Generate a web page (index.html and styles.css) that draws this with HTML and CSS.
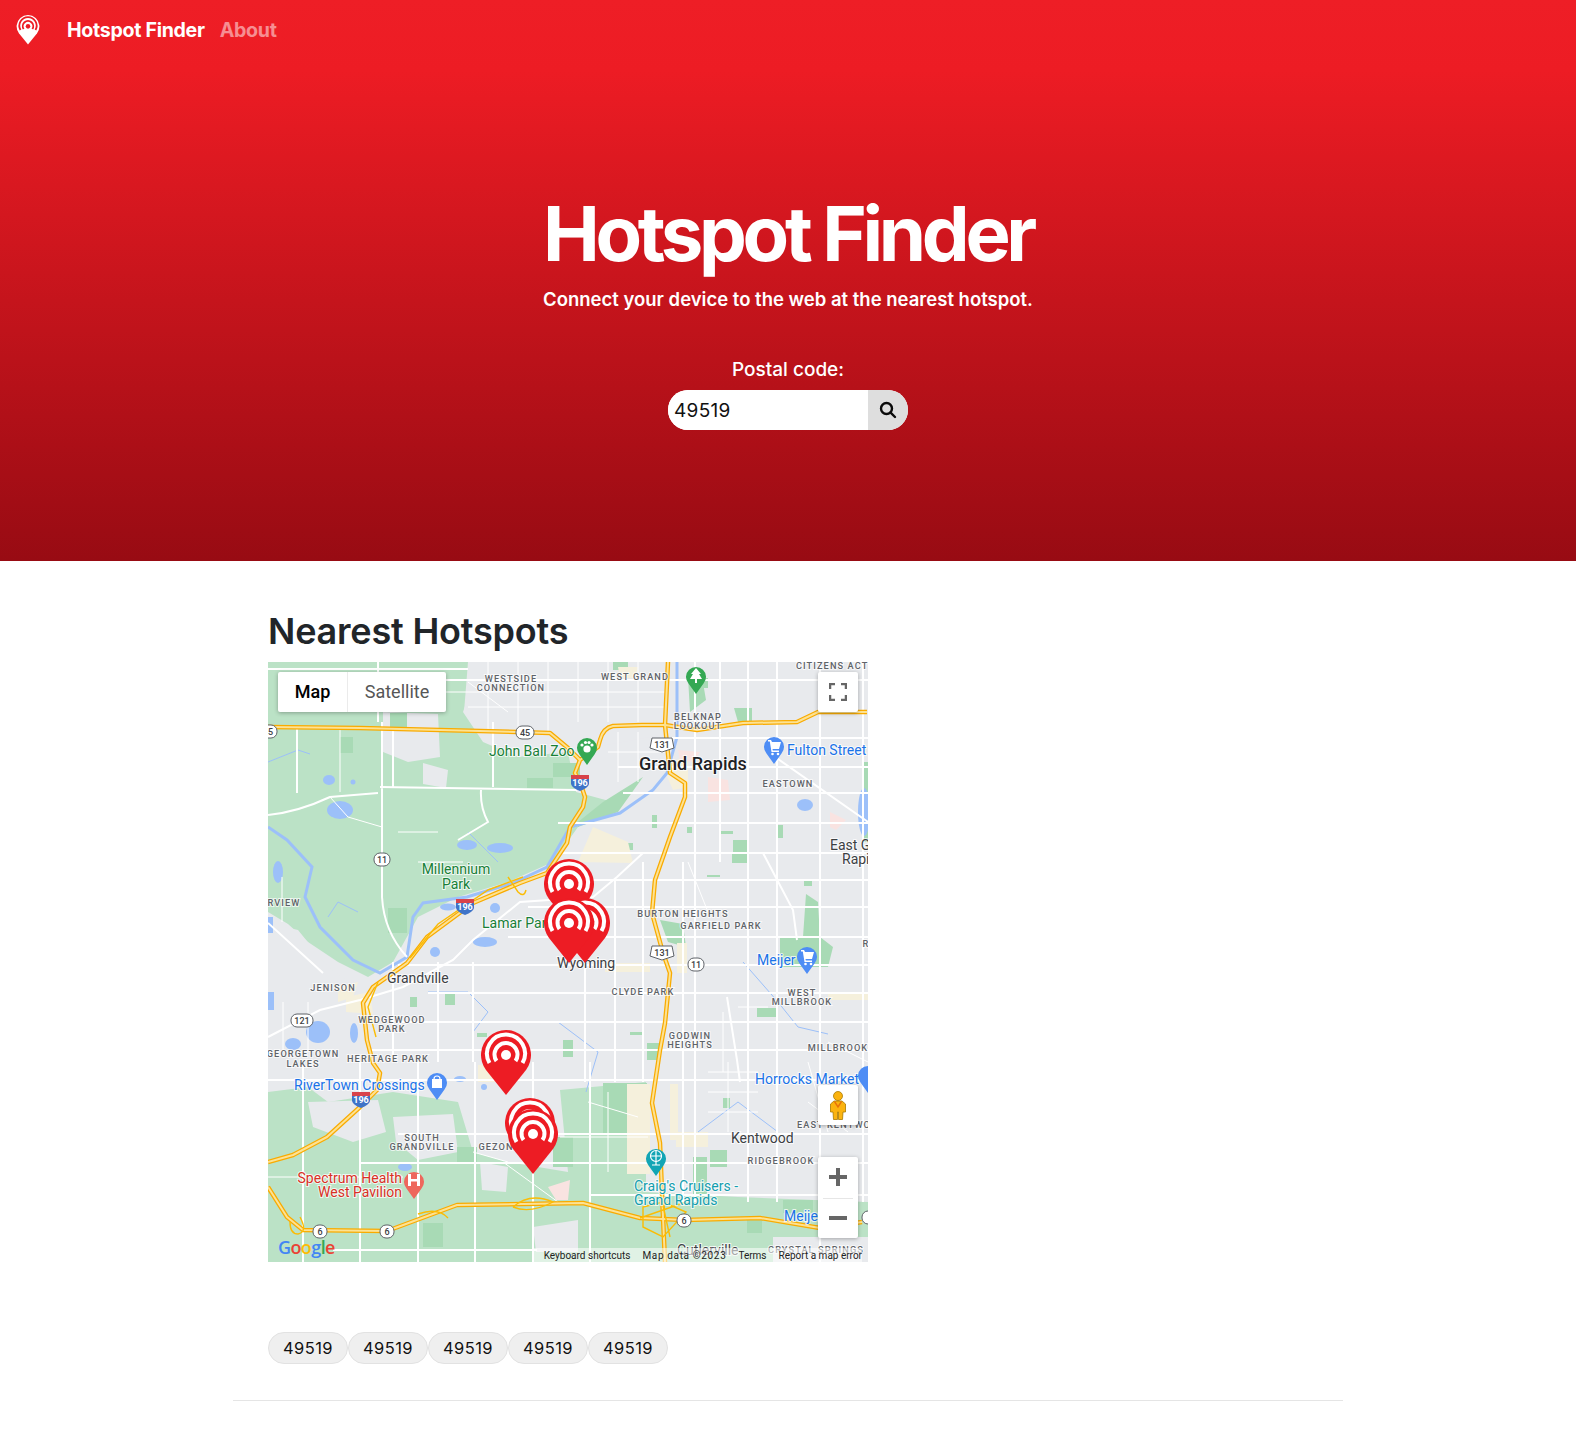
FILE: index.html
```html
<!DOCTYPE html>
<html lang="en">
<head>
  <meta charset="UTF-8">
  <meta name="viewport" content="width=device-width, initial-scale=1.0">
  <title>Hotspot Finder</title>
  <link rel="stylesheet" href="styles.css">
</head>
<body>
  <svg class="defs" width="0" height="0" aria-hidden="true">
    <symbol id="pin" viewBox="0 0 50 66">
      <path class="pin-body" d="M25 65 L5 40 A25 25 0 1 1 45 40 Z"/>
      <path class="pin-ring" d="M8.5 33 A19 19 0 1 1 41.5 33"/>
      <path class="pin-ring" d="M15.5 31 A11.5 11.5 0 1 1 34.5 31"/>
      <circle class="pin-dot" cx="25" cy="25" r="5"/>
    </symbol>
    <symbol id="poi" viewBox="0 0 22 30">
      <path d="M11 29 L3.5 18.5 A10 10 0 1 1 18.5 18.5 Z"/>
    </symbol>
    <g id="hw-lines">
      <path d="M0 65 L92 66 L249 70 L282 71 L300 86 L312 98"/>
      <path d="M599 50 L550 50 L529 60 L475 61 L429 68 L397 63 L374 63 L345 64 Q335 66 332 78 L330 85 L312 98 L307 111 L312 120 L317 135 L315 145 L302 165 L299 181 L279 211 L252 221 L205 241 L159 275 L139 301 L105 325 L95 341 L99 378 L105 401 L112 411 L109 428 L92 445 L59 475 L25 493 L0 500"/>
      <path d="M400 0 L397 63 L402 111 L417 121 L417 135 L402 175 L387 218 L384 251 L395 291 L402 311 L397 361 L392 388 L384 441 L392 481 L395 555 L397 600"/>
      <path d="M0 525 L19 555 L35 568 L119 569 L189 543 L315 541 L372 556 L417 558 L492 556 L552 566 L594 560"/>
    </g>
  </svg>

  <!-- Hero -->
  <section class="hero">
    <nav class="navbar">
      <svg class="logo" width="24" height="30"><use href="#pin"/></svg>
      <a class="brand" href="#">Hotspot Finder</a>
      <a class="nav-link" href="#">About</a>
    </nav>
    <h1>Hotspot Finder</h1>
    <p class="lead">Connect your device to the web at the nearest hotspot.</p>
    <label class="postal-label" for="postal">Postal code:</label>
    <div class="search">
      <input type="text" id="postal" value="49519">
      <button type="button" aria-label="Search">
        <svg width="18" height="18" viewBox="0 0 18 18"><circle cx="7.5" cy="7.5" r="5.5"/><path d="M11.6 11.6 L16 16"/></svg>
      </button>
    </div>
  </section>

  <main class="container">
    <h2>Nearest Hotspots</h2>

    <div class="map">
      <svg class="map-canvas" width="600" height="600" viewBox="0 0 600 600">
        <rect width="600" height="600" class="urban"/>

        <!-- parks and fields -->
        <path class="green" d="M0 0 L200 0 L205 20 L195 50 L215 80 L250 95 L300 90 L308 130 L345 140 L310 165 L285 200 L240 220 L190 235 L150 255 L125 300 L100 315 L70 300 L40 280 L20 262 L0 250 Z"/>
        <path class="green" d="M0 430 L40 425 L60 440 L125 430 L190 440 L205 490 L240 500 L300 510 L292 428 L378 420 L378 530 L470 535 L600 540 L600 600 L0 600 Z"/>
        <path class="urban" d="M115 50 L170 52 L172 95 L140 100 L115 90 Z M155 101 L180 108 L178 126 L155 122 Z M0 261 L30 268 L60 305 L95 330 L90 400 L0 400 Z M40 440 L110 438 L118 470 L85 480 L45 465 Z M125 455 L185 452 L190 490 L150 498 L128 480 Z M212 500 L240 505 L238 530 L214 528 Z M265 565 L310 558 L310 590 L268 590 Z M505 575 L600 575 L600 600 L505 600 Z"/>
        <path class="urban" d="M200 0 L410 0 L410 70 L300 90 L245 92 L215 78 L196 50 Z"/>
        <path class="dark-green" d="M72 75 H85 V91 H72 Z M122 51 H139 V65 H122 Z M259 116 H285 V126 H259 Z M285 101 H312 V115 H285 Z M120 246 H139 V271 H120 Z M310 160 L335 140 L375 115 L350 150 L310 165 Z M345 0 H360 V8 H345 Z M420 15 L434 15 L438 38 L422 50 Z M466 46 H484 V60 H470 Z M430 16 H440 V26 H430 Z"/>
        <path class="dark-green" d="M465 178 H480 V190 H465 Z M464 191 H480 V201 H464 Z M510 163 H515 V176 H510 Z M453 169 H465 V172 H453 Z M419 165 H424 V171 H419 Z M384 153 H389 V166 H384 Z M355 181 H365 V188 H355 Z M536 218 H544 V224 H536 Z M439 213 H452 V215 H439 Z M595 100 H600 V180 H595 Z"/>
        <path class="dark-green" d="M489 346 H510 V355 H489 Z M362 370 H374 V373 H362 Z M379 381 H392 V398 H379 Z M295 378 H305 V395 H295 Z M177 331 H187 V343 H177 Z M142 335 H149 V345 H142 Z M209 371 H219 V375 H209 Z M392 258 L415 262 L418 285 L400 280 Z M512 275 L535 275 L538 232 L550 240 L552 275 L565 285 L560 305 L512 305 Z"/>
        <path class="dark-green" d="M189 485 H209 V501 H189 Z M155 561 H175 V585 H155 Z M285 475 H305 V505 H285 Z M335 421 H379 V471 H335 Z M292 475 H302 V501 H292 Z M425 495 H439 V535 H425 Z M442 488 H459 V505 H442 Z M455 436 H462 V446 H455 Z M479 558 H494 V571 H479 Z M515 538 H545 V551 H515 Z"/>
        <path class="beige" d="M350 5 L370 5 L368 16 L352 16 Z M325 165 L360 180 L365 201 L310 200 Z M395 105 L420 92 L420 125 L405 128 Z M337 301 H382 V310 H337 Z M409 281 H419 V311 H409 Z M78 335 L102 330 L105 352 L78 350 Z M210 403 H236 V420 H210 Z M359 422 H382 V512 H359 Z M402 422 H410 V478 H402 Z M408 470 H440 V485 H408 Z M560 330 H600 V338 H560 Z M70 325 L90 320 L85 335 L70 340 Z"/>
        <path class="pink" d="M410 88 L432 90 L425 100 L412 98 Z M440 115 L460 118 L462 138 L440 140 Z M562 150 L578 158 L568 168 L562 165 Z M280 525 L302 518 L300 538 L288 538 Z"/>

        <!-- water -->
        <path class="river" d="M409 0 L409 75 L399 111 L385 128 L352 151 L302 165 L279 205 L245 221 L199 235 L155 241 L145 255 L139 295 L112 311 L85 298 L52 265 L37 235 L44 205 L19 178 L0 165"/>
        <g class="water">
          <ellipse cx="61" cy="118" rx="6" ry="5"/>
          <ellipse cx="72" cy="148" rx="13" ry="9"/>
          <circle cx="85" cy="120" r="2.500"/>
          <ellipse cx="199" cy="183" rx="10" ry="5"/>
          <ellipse cx="232" cy="186" rx="13" ry="5"/>
          <ellipse cx="180" cy="245" rx="8" ry="3.500"/>
          <ellipse cx="227" cy="246" rx="5" ry="5"/>
          <ellipse cx="217" cy="280" rx="12" ry="5"/>
          <ellipse cx="167" cy="290" rx="5" ry="5"/>
          <ellipse cx="10" cy="210" rx="5" ry="11"/>
          <ellipse cx="50" cy="370" rx="12" ry="11"/>
          <ellipse cx="25" cy="382" rx="8" ry="6"/>
          <ellipse cx="86" cy="371" rx="4" ry="10"/>
          <ellipse cx="137" cy="505" rx="7" ry="4"/>
          <ellipse cx="537" cy="143" rx="8" ry="6"/>
          <ellipse cx="596" cy="150" rx="6" ry="24"/>
          <rect x="0" y="255" width="5" height="16"/>
          <rect x="0" y="330" width="6" height="18"/>
          <ellipse cx="192" cy="417" rx="6" ry="3"/>
          <ellipse cx="216" cy="425" rx="3" ry="3"/>
        </g>
        <path class="stream" d="M0 100 L30 88 L42 92 M200 170 L215 185 L230 200 M430 470 L470 440 L510 470 M475 300 L510 340 L530 365 L560 372 M160 330 L200 330 L220 350 L205 370 M290 360 L330 390 L318 430 M60 255 L70 240 L90 250"/>

        <!-- minor roads -->
        <path class="road-thin" d="M150 30 H400 M200 45 H400 M220 0 V70 M250 0 V70 M280 0 V70 M310 0 V60 M340 0 V60 M370 0 V60 M340 90 H400 M350 70 V120 M370 70 V120 M72 65 V130 M14 215 V260 M15 340 V390 M40 340 V390 M200 20 L240 50 M420 200 L440 250 M470 345 H500 M455 350 V410 M560 380 L600 400 M540 440 L580 470 M320 440 L370 455 M340 430 V510 M440 410 H490 M440 430 H490 M440 450 H490 M460 400 V470 M480 400 V470 M540 400 L560 470 M205 490 L240 500 M235 500 L290 540 M292 475 H380 M62 135 L80 155 L114 165 M0 515 H135 M150 200 H195 M130 170 H170"/>
        <path class="road" d="M0 7 H200 M29 65 V131 M110 0 V60 M114 60 V235 Q116 270 139 295 M0 153 Q30 150 62 135 L110 131 M112 125 L309 128 M213 128 Q212 145 220 160 L190 178 M125 65 V125 M225 60 V125"/>
        <path class="road" d="M150 18 H600 M397 76 H600 M350 105 H600 M355 131 H600 M290 161 H600 M290 191 H600 M290 218 H600 M260 245 H600 M240 275 H600 M130 303 H600 M160 331 H600 M130 360 H600 M100 388 H600 M0 418 H600 M130 472 H600 M92 501 H600 M322 533 H600 M65 588 H269"/>
        <path class="road" d="M427 0 V540 M452 0 V200 M480 0 V540 M509 0 V540 M552 0 V600 M595 0 V540 M347 218 V420 M375 200 V420 M415 200 V540 M317 230 V420 M205 300 V400 M170 300 V400 M125 300 V400 M35 400 V600 M92 400 V600 M150 400 V600 M207 400 V600 M265 400 V600 M322 400 V600 M495 191 L525 248 L529 278"/>
        <path class="road" d="M375 191 L349 215 L325 235 L252 240 L205 278 L185 298 L135 325 L92 338 L52 348 L0 375 M0 261 L55 311 M459 335 L469 398 L472 420 M500 90 L600 160"/>

        <!-- highways, casing then fill -->
        <use class="hw-casing" href="#hw-lines"/>
        <use class="hw-fill" href="#hw-lines"/>
        <path class="ramp" d="M255 215 L220 228 L170 262 L142 296 M110 320 L100 345 L108 375 M32 555 Q40 570 30 572 Q22 572 22 560 M150 552 Q170 545 180 556 M245 545 Q262 530 285 540 Q262 552 245 545 M375 545 L395 540 L418 550 L395 575 L375 565 Z M392 530 L402 575 M372 556 L418 540 M240 215 L250 230 Q256 236 258 228"/>

        <!-- labels -->
        <g class="hood">
          <text x="243" y="20">WESTSIDE</text>
          <text x="243" y="29">CONNECTION</text>
          <text x="367" y="18">WEST GRAND</text>
          <text x="566" y="7">CITIZENS ACTI</text>
          <text x="430" y="58">BELKNAP</text>
          <text x="430" y="67">LOOKOUT</text>
          <text x="520" y="125">EASTOWN</text>
          <text x="16" y="244">RVIEW</text>
          <text x="65" y="329">JENISON</text>
          <text x="124" y="361">WEDGEWOOD</text>
          <text x="124" y="370">PARK</text>
          <text x="35" y="395">GEORGETOWN</text>
          <text x="35" y="405">LAKES</text>
          <text x="120" y="400">HERITAGE PARK</text>
          <text x="154" y="479">SOUTH</text>
          <text x="154" y="488">GRANDVILLE</text>
          <text x="228" y="488">GEZON</text>
          <text x="415" y="255">BURTON HEIGHTS</text>
          <text x="453" y="267">GARFIELD PARK</text>
          <text x="375" y="333">CLYDE PARK</text>
          <text x="534" y="334">WEST</text>
          <text x="534" y="343">MILLBROOK</text>
          <text x="422" y="377">GODWIN</text>
          <text x="422" y="386">HEIGHTS</text>
          <text x="570" y="389">MILLBROOK</text>
          <text x="566" y="466">EAST KENTWO</text>
          <text x="513" y="502">RIDGEBROOK</text>
          <text x="598" y="285">R</text>
          <text x="548" y="591">CRYSTAL SPRINGS</text>
        </g>
        <g class="place">
          <text class="city" x="425" y="108">Grand Rapids</text>
          <text x="562" y="188">East G</text>
          <text x="574" y="202">Rapi</text>
          <text x="119" y="321">Grandville</text>
          <text x="289" y="306">Wyoming</text>
          <text x="463" y="481">Kentwood</text>
          <text x="409" y="593">Cutlerville</text>
        </g>
        <g class="label-green">
          <text x="221" y="94">John Ball Zoo</text>
          <text x="188" y="212" text-anchor="middle">Millennium</text>
          <text x="188" y="227" text-anchor="middle">Park</text>
          <text x="214" y="266">Lamar Park</text>
        </g>
        <g class="label-blue">
          <text x="519" y="93">Fulton Street</text>
          <text x="26" y="428">RiverTown Crossings</text>
          <text x="489" y="303">Meijer</text>
          <text x="487" y="422">Horrocks Market</text>
          <text x="516" y="559">Meijer</text>
        </g>
        <g class="label-red">
          <text x="134" y="521" text-anchor="end">Spectrum Health</text>
          <text x="134" y="535" text-anchor="end">West Pavilion</text>
        </g>
        <g class="label-teal">
          <text x="366" y="529">Craig's Cruisers -</text>
          <text x="366" y="543">Grand Rapids</text>
        </g>

        <!-- route shields -->
        <g class="shield"><rect x="-9" y="63" width="18" height="13" rx="6"/><text x="0" y="73">45</text></g>
        <g class="shield"><rect x="248" y="64" width="18" height="13" rx="6"/><text x="257" y="74">45</text></g>
        <g class="shield"><rect x="106" y="191" width="16" height="13" rx="6"/><text x="114" y="201">11</text></g>
        <g class="shield"><rect x="23" y="352" width="22" height="13" rx="6"/><text x="34" y="362">121</text></g>
        <g class="shield"><rect x="420" y="296" width="16" height="13" rx="6"/><text x="428" y="306">11</text></g>
        <g class="shield"><rect x="45" y="563" width="14" height="13" rx="6"/><text x="52" y="573">6</text></g>
        <g class="shield"><rect x="112" y="563" width="14" height="13" rx="6"/><text x="119" y="573">6</text></g>
        <g class="shield"><rect x="409" y="552" width="14" height="13" rx="6"/><text x="416" y="562">6</text></g>
        <g class="shield"><rect x="594" y="549" width="14" height="13" rx="6"/></g>
        <g class="shield"><path d="M384 76 H404 L406 86 L394 90 L382 86 Z"/><text x="394" y="86">131</text></g>
        <g class="shield"><path d="M384 284 H404 L406 294 L394 298 L382 294 Z"/><text x="394" y="294">131</text></g>
        <g class="interstate"><path class="i-top" d="M303 113 H321 V117 H303 Z"/><path d="M303 117 H321 V122 Q320 126 312 129 Q304 126 303 122 Z"/><text x="312" y="124">196</text></g>
        <g class="interstate"><path class="i-top" d="M188 237 H206 V241 H188 Z"/><path d="M188 241 H206 V246 Q205 250 197 253 Q189 250 188 246 Z"/><text x="197" y="248">196</text></g>
        <g class="interstate"><path class="i-top" d="M84 430 H102 V434 H84 Z"/><path d="M84 434 H102 V439 Q101 443 93 446 Q85 443 84 439 Z"/><text x="93" y="441">196</text></g>

        <!-- place markers -->
        <g class="poi poi-green">
          <use href="#poi" x="417" y="3" width="22" height="30"/>
          <path class="poi-glyph" d="M428 6 L433 12 L431 12 L434 17 L429 17 V21 H427 V17 L422 17 L425 12 L423 12 Z"/>
          <use href="#poi" x="308" y="74" width="22" height="30"/>
          <circle class="poi-glyph" cx="319" cy="87" r="3.6"/><circle class="poi-glyph" cx="314" cy="83" r="1.6"/><circle class="poi-glyph" cx="317.500" cy="80.500" r="1.6"/><circle class="poi-glyph" cx="321" cy="80.500" r="1.6"/><circle class="poi-glyph" cx="324" cy="83" r="1.6"/>
        </g>
        <g class="poi poi-blue">
          <use href="#poi" x="495" y="73" width="22" height="30"/>
          <path class="poi-glyph" d="M500 78 H503 L504 80 H513 L511 87 H504.500 L504.800 88.500 H511 V90 H503.500 L501.800 79.500 H500 Z"/><circle class="poi-glyph" cx="504.500" cy="92" r="1.300"/><circle class="poi-glyph" cx="510" cy="92" r="1.300"/>
          <use href="#poi" x="528" y="283" width="22" height="30"/>
          <path class="poi-glyph" d="M533 288 H536 L537 290 H546 L544 297 H537.500 L537.800 298.500 H544 V300 H536.500 L534.800 289.500 H533 Z"/><circle class="poi-glyph" cx="537.500" cy="302" r="1.300"/><circle class="poi-glyph" cx="543" cy="302" r="1.300"/>
          <use href="#poi" x="158" y="409" width="22" height="30"/>
          <path class="poi-glyph" d="M164 417 H174 V426 H164 Z"/><path class="poi-handle" d="M166 417 A3 3 0 0 1 172 417"/>
          <use href="#poi" x="589" y="402" width="22" height="30"/>
        </g>
        <g class="poi poi-red">
          <use href="#poi" x="135" y="508" width="22" height="30"/>
          <path class="poi-glyph" d="M140 512 H143 V517 H149 V512 H152 V524 H149 V519.500 H143 V524 H140 Z"/>
        </g>
        <g class="poi poi-teal">
          <use href="#poi" x="377" y="485" width="22" height="30"/>
          <circle class="poi-wheel" cx="388" cy="494" r="5.500"/><path class="poi-wheel" d="M388 494 V503 M384 503 H392 M382.500 494 H393.500 M388 488.500 V499.500"/>
        </g>

        <!-- hotspot pins -->
        <use class="hotspot" href="#pin" x="276" y="197" width="50" height="66"/>
        <use class="hotspot" href="#pin" x="292" y="236" width="50" height="66"/>
        <use class="hotspot" href="#pin" x="276" y="236" width="50" height="66"/>
        <use class="hotspot" href="#pin" x="213" y="368" width="50" height="66"/>
        <use class="hotspot" href="#pin" x="237" y="436" width="50" height="66"/>
        <use class="hotspot" href="#pin" x="240" y="447" width="50" height="66"/>
      </svg>

      <!-- map controls -->
      <div class="map-type">
        <span class="map-type-item is-active">Map</span>
        <span class="map-type-item">Satellite</span>
      </div>
      <button type="button" class="map-btn fullscreen" aria-label="Fullscreen">
        <svg width="18" height="18" viewBox="0 0 18 18"><path d="M1 6 V1 H6 M12 1 H17 V6 M17 12 V17 H12 M6 17 H1 V12"/></svg>
      </button>
      <button type="button" class="map-btn pegman" aria-label="Street View">
        <svg width="16" height="29" viewBox="0 0 16 29">
          <circle cx="8" cy="5" r="4.500"/>
          <path d="M4 10 H12 L15.500 13 V21 H13 L12.500 28.500 H8.500 V21 H7.500 V28.500 H3.500 L3 21 H0.500 V13 Z"/>
          <path class="collar" d="M4.500 10.500 L8 16 L11.500 10.500"/>
        </svg>
      </button>
      <div class="zoom-box">
        <button type="button" aria-label="Zoom in"><span class="plus"></span></button>
        <button type="button" aria-label="Zoom out"><span class="minus"></span></button>
      </div>
      <div class="google-logo"><span class="g-blue">G</span><span class="g-red">o</span><span class="g-yellow">o</span><span class="g-blue">g</span><span class="g-green">l</span><span class="g-red">e</span></div>
      <div class="attribution">
        <span>Keyboard shortcuts</span>
        <span class="map-data">Map data ©2023</span>
        <span class="terms">Terms</span>
        <span>Report a map error</span>
      </div>
    </div>

    <div class="chips">
      <span class="chip">49519</span>
      <span class="chip">49519</span>
      <span class="chip">49519</span>
      <span class="chip">49519</span>
      <span class="chip">49519</span>
    </div>
    <hr>
  </main>
</body>
</html>
```

FILE: styles.css
```css
* {
  box-sizing: border-box;
}

body {
  margin: 0;
  font-family: Inter, "Noto Sans", sans-serif;
  color: #212529;
  background: white;
}

.defs {
  position: absolute;
}

/* Hero */
.hero {
  height: 561px;
  display: flex;
  flex-direction: column;
  align-items: center;
  color: white;
  background: linear-gradient(#ee1e26 0, #ed1c24 70px, #980b13 100%);
}

.navbar {
  align-self: stretch;
  display: flex;
  align-items: center;
  height: 60px;
  padding-left: 16px;
  font-size: 19.6px;
  font-weight: 700;
  letter-spacing: -0.3px;
}

.logo {
  --pin: white;
  --ring: #ed1c24;
  margin-right: 27px;
}

.brand {
  color: white;
  text-decoration: none;
  margin-right: 15px;
}

.nav-link {
  color: rgba(255, 255, 255, 0.5);
  text-decoration: none;
}

h1 {
  margin: 127px 0 0;
  font-size: 76px;
  line-height: 92px;
  font-weight: 700;
  letter-spacing: -4.3px;
}

.lead {
  margin: 7px 0 0;
  font-size: 18.5px;
  line-height: 26px;
  font-weight: 600;
}

.postal-label {
  margin-top: 45px;
  font-size: 19px;
  line-height: 26px;
  font-weight: 500;
}

.search {
  display: flex;
  width: 240px;
  height: 40px;
  margin-top: 7px;
  border-radius: 20px;
  overflow: hidden;
  background: white;
}

.search input {
  flex: 1;
  min-width: 0;
  border: none;
  padding: 0 6px;
  font-family: inherit;
  font-size: 19px;
  letter-spacing: 0.3px;
  color: #111;
  outline: none;
}

.search button {
  width: 40px;
  border: none;
  padding: 0;
  display: flex;
  align-items: center;
  justify-content: center;
  background: #dedede;
}

.search svg {
  fill: none;
  stroke: #0b0b0b;
  stroke-width: 2.4;
  stroke-linecap: round;
}

/* Content */
.container {
  width: 1110px;
  margin: 0 auto;
}

h2 {
  margin: 46px 0 0 35px;
  height: 55px;
  font-size: 36px;
  line-height: 48px;
  font-weight: 600;
  letter-spacing: -0.2px;
}

/* Map */
.map {
  position: relative;
  width: 600px;
  height: 600px;
  margin-left: 35px;
  overflow: hidden;
  font-family: Roboto, sans-serif;
}

.map-canvas {
  display: block;
  font-family: Roboto, sans-serif;
}

.urban { fill: #e8eaed; }
.green { fill: #bbe2c6; }
.dark-green { fill: #a8dab5; }
.beige { fill: #f5f0dc; }
.pink { fill: #f9e3e1; }
.water { fill: #9cc0f9; }

.river {
  fill: none;
  stroke: #9cc0f9;
  stroke-width: 3;
}

.stream {
  fill: none;
  stroke: #9cc0f9;
  stroke-width: 1;
}

.road, .road-thin {
  fill: none;
  stroke: white;
}

.road { stroke-width: 2; }
.road-thin { stroke-width: 1; }

.hw-casing, .hw-fill {
  fill: none;
  stroke-linejoin: round;
}

.hw-casing {
  stroke: #f9ab00;
  stroke-width: 4.5;
}

.hw-fill {
  stroke: #fde293;
  stroke-width: 2;
}

.ramp {
  fill: none;
  stroke: #fbbc04;
  stroke-width: 1.4;
}

.hood text {
  font-size: 9.2px;
  font-weight: 500;
  letter-spacing: 1.1px;
  text-anchor: middle;
  fill: #5f6368;
  paint-order: stroke;
  stroke: rgba(255, 255, 255, 0.7);
  stroke-width: 2px;
}

.place text, .label-green text, .label-blue text, .label-red text, .label-teal text {
  font-size: 14px;
  paint-order: stroke;
  stroke: rgba(255, 255, 255, 0.75);
  stroke-width: 2px;
}

.place text { fill: #3c4043; }
.place .city { font-size: 18px; font-weight: 500; fill: #202124; text-anchor: middle; }
.label-green text { fill: #188038; }
.label-blue text { fill: #1a73e8; }
.label-red text { fill: #d93025; }
.label-teal text { fill: #129eaf; }

.shield rect, .shield path {
  fill: white;
  stroke: #5f6368;
  stroke-width: 1;
}

.shield text {
  font-size: 9px;
  font-weight: 500;
  text-anchor: middle;
  fill: #3c4043;
}

.interstate path { fill: #3f74c8; }
.interstate .i-top { fill: #d8434a; }

.interstate text {
  font-size: 9px;
  font-weight: 700;
  text-anchor: middle;
  fill: white;
}

.poi-green { fill: #34a853; }
.poi-blue { fill: #4e8df5; }
.poi-red { fill: #ee675c; }
.poi-teal { fill: #12a5b5; }
.poi-glyph { fill: white; }

.poi-handle {
  fill: none;
  stroke: white;
  stroke-width: 1.2;
}

.poi-wheel {
  fill: none;
  stroke: white;
  stroke-width: 1.2;
}

.hotspot {
  --pin: #ed1c24;
  --ring: white;
}

.pin-body { fill: var(--pin); }
.pin-dot { fill: var(--ring); }

.pin-ring {
  fill: none;
  stroke: var(--ring);
  stroke-width: 4;
}

/* Map controls */
.map-type {
  position: absolute;
  top: 10px;
  left: 10px;
  height: 40px;
  display: flex;
  background: white;
  border-radius: 2px;
  box-shadow: 0 1px 4px rgba(0, 0, 0, 0.3);
  font-size: 18px;
  line-height: 40px;
  color: #565656;
}

.map-type-item {
  width: 98px;
  text-align: center;
}

.map-type-item.is-active {
  width: 70px;
  color: black;
  font-weight: 500;
  border-right: 1px solid #ebebeb;
}

.map-btn, .zoom-box {
  position: absolute;
  right: 10px;
  width: 40px;
  background: white;
  border-radius: 2px;
  box-shadow: 0 1px 4px rgba(0, 0, 0, 0.3);
}

.map-btn {
  height: 40px;
  border: none;
  padding: 0;
  display: flex;
  align-items: center;
  justify-content: center;
}

.fullscreen {
  top: 10px;
}

.fullscreen svg {
  fill: none;
  stroke: #666;
  stroke-width: 2.5;
}

.pegman {
  top: 423px;
}

.pegman svg {
  fill: #fbb30f;
  stroke: #a87a00;
  stroke-width: 0.8;
}

.pegman .collar {
  fill: none;
  stroke: #e8710a;
  stroke-width: 1.4;
}

.zoom-box {
  top: 495px;
  height: 81px;
  display: flex;
  flex-direction: column;
}

.zoom-box button {
  position: relative;
  flex: 1;
  border: none;
  padding: 0;
  background: none;
}

.zoom-box button + button::before {
  content: "";
  position: absolute;
  top: 0;
  left: 5px;
  right: 5px;
  height: 1px;
  background: #e6e6e6;
}

.plus, .minus {
  display: block;
  width: 18px;
  height: 4px;
  margin: 0 auto;
  background: #666;
}

.plus {
  position: relative;
}

.plus::after {
  content: "";
  position: absolute;
  left: 7px;
  top: -7px;
  width: 4px;
  height: 18px;
  background: #666;
}

.google-logo {
  position: absolute;
  left: 10px;
  bottom: 2px;
  font-family: "Open Sans", sans-serif;
  font-size: 18px;
  line-height: 26px;
  font-weight: 600;
  letter-spacing: -0.6px;
}

.g-blue { color: #4285f4; }
.g-red { color: #ea4335; }
.g-yellow { color: #fbbc05; }
.g-green { color: #34a853; }

.attribution {
  position: absolute;
  right: 6px;
  bottom: 0;
  height: 14px;
  display: flex;
  gap: 12px;
  padding-left: 10px;
  font-size: 10px;
  line-height: 15px;
  color: #222;
  background: rgba(255, 255, 255, 0.55);
}

.attribution .map-data {
  letter-spacing: 0.65px;
}

/* Results */
.chips {
  display: flex;
  margin: 70px 0 0 35px;
}

.chip {
  width: 80px;
  height: 32px;
  border: 1px solid #e2e2e2;
  border-radius: 16px;
  background: #efefef;
  text-align: center;
  font-size: 16.5px;
  line-height: 30px;
  letter-spacing: 0.4px;
  color: #111;
}

hr {
  margin: 36px 0 0;
  border: none;
  border-top: 1px solid #e5e5e5;
}
```
